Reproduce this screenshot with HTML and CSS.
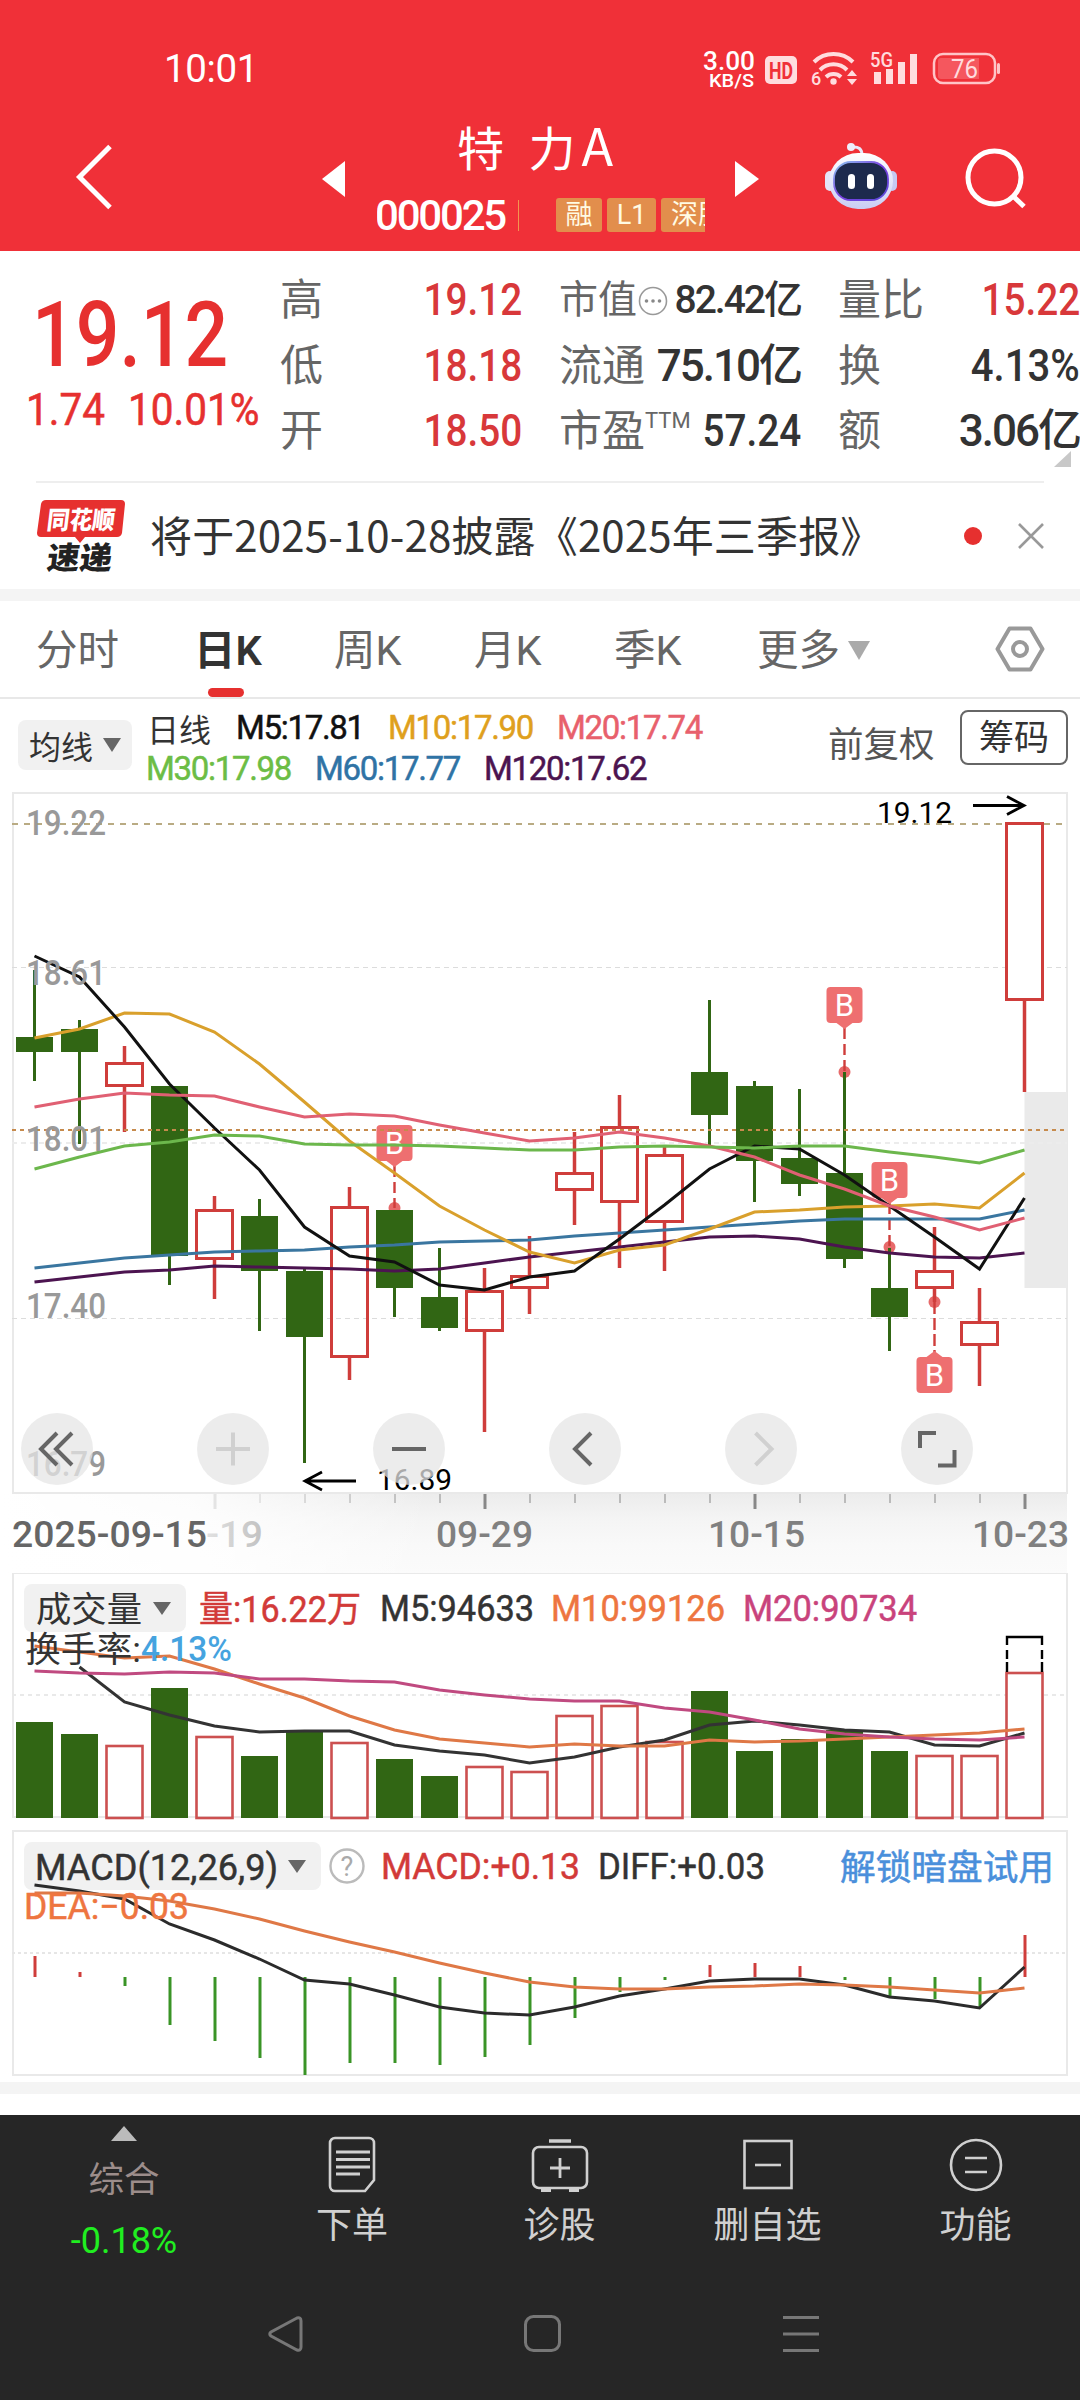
FILE: index.html
```html
<!DOCTYPE html>
<html lang="zh-CN">
<head>
<meta charset="utf-8">
<title>特 力A 000025</title>
<link rel="stylesheet" href="styles.css">
</head>
<body>
<header class="header">
  <div class="status">
    <span class="clock">10:01</span>
    <svg class="status-icons" width="305" height="48" viewBox="700 42 305 48">
      <g fill="#fff" font-weight="500">
        <text x="703" y="69.500" font-size="25" textLength="52" lengthAdjust="spacingAndGlyphs">3.00</text>
        <text x="709" y="87" font-size="19" textLength="45" lengthAdjust="spacingAndGlyphs">KB/S</text>
      </g>
      <rect x="765" y="56" width="32" height="28" rx="5" fill="#ffdcde"/>
      <text x="769" y="79" font-size="24" font-weight="700" fill="#f03038" textLength="24" lengthAdjust="spacingAndGlyphs">HD</text>
      <g fill="none" stroke="#ffdcde" stroke-width="4">
        <path d="M814 62a28 28 0 0 1 39 0"/><path d="M820 70a19 19 0 0 1 27 0"/><path d="M826 77a11 11 0 0 1 15 0"/>
      </g>
      <circle cx="833.500" cy="81.500" r="3.200" fill="#ffdcde"/>
      <text x="811" y="85" font-size="18" font-weight="500" fill="#ffdcde">6</text>
      <path d="M847 76l5-6 5 6zM847 79h10l-5 6z" fill="#ffdcde"/>
      <text x="870" y="67" font-size="20" font-weight="500" fill="#ffdcde" textLength="23" lengthAdjust="spacingAndGlyphs">5G</text>
      <path d="M874 72h7v12h-7zM886 69h7v15h-7zM898 62h7v22h-7zM910 54h7v30h-7z" fill="#ffdcde"/>
      <rect x="934" y="54" width="61" height="29" rx="9" fill="none" stroke="#ffc4c7" stroke-width="2.500"/>
      <path d="M941 58h38v21h-38a3 3 0 0 1-3-3V61a3 3 0 0 1 3-3z" fill="#f5575e"/>
      <rect x="997" y="63" width="3" height="11" rx="1.500" fill="#ffc4c7"/>
      <text x="951" y="77.500" font-size="25" fill="#ffdcde" textLength="27" lengthAdjust="spacingAndGlyphs">76</text>
    </svg>
  </div>
  <div class="titlebar">
    <svg class="back" width="40" height="70" viewBox="75 142 40 70"><path d="M110 146.500L79.500 177l30.500 30.500" fill="none" stroke="#fff" stroke-width="5"/></svg>
    <svg class="prev" width="24" height="36" viewBox="0 0 24 36"><path d="M24 0v36L1 18z" fill="#fff"/></svg>
    <div class="title">
      <h1 class="name">特 力<span class="suffix">A</span></h1>
      <div class="meta"><span class="code">000025</span><i class="bar"></i><span class="tag">融</span><span class="tag">L1</span><span class="tag tag-wide">深股通</span></div>
    </div>
    <svg class="next" width="24" height="36" viewBox="0 0 24 36"><path d="M0 0v36l24-18z" fill="#fff"/></svg>
    <svg class="robot" width="76" height="70" viewBox="823 142 76 70">
      <defs>
        <linearGradient id="shell" x1="0" y1="0" x2="0" y2="1"><stop offset="0" stop-color="#fff"/><stop offset="1" stop-color="#c9cdf4"/></linearGradient>
        <linearGradient id="rim" x1="0" y1="0" x2="1" y2="1"><stop offset="0" stop-color="#8cc8f0"/><stop offset=".5" stop-color="#7a3fe0"/><stop offset="1" stop-color="#5a4ad8"/></linearGradient>
      </defs>
      <path d="M852 147q10-1 10 8" fill="none" stroke="#e8e8fa" stroke-width="3"/>
      <circle cx="851" cy="147" r="4" fill="#eeeefb"/>
      <rect x="825" y="171" width="10" height="20" rx="5" fill="#e4e4f8"/><rect x="887" y="171" width="10" height="20" rx="5" fill="#c6c9f2"/>
      <rect x="829" y="153" width="64" height="56" rx="29" fill="url(#shell)"/>
      <rect x="834" y="162" width="54" height="38" rx="17" fill="#1d2a4d" stroke="url(#rim)" stroke-width="1.800"/>
      <rect x="848" y="174" width="7" height="15" rx="3.500" fill="#fff"/><rect x="867" y="174" width="7" height="15" rx="3.500" fill="#fff"/>
    </svg>
    <svg class="search" width="64" height="64" viewBox="964 146 64 64"><g fill="none" stroke="#fff" stroke-width="5"><circle cx="994.500" cy="177.500" r="26.500"/><path d="M1013 196l11 10.500"/></g></svg>
  </div>
</header>

<section class="quote">
  <div class="price">
    <div class="last"><span class="din">19.12</span></div>
    <div class="change"><span class="din">1.74</span><span class="din">10.01%</span></div>
  </div>
  <dl class="stats col-a">
    <dt>高</dt><dd class="up"><span class="din">19.12</span></dd>
    <dt>低</dt><dd class="up"><span class="din">18.18</span></dd>
    <dt>开</dt><dd class="up"><span class="din">18.50</span></dd>
  </dl>
  <dl class="stats col-b">
    <dt class="small">市值<svg width="30" height="30" viewBox="0 0 30 30"><circle cx="15" cy="15" r="13.500" fill="none" stroke="#999" stroke-width="1.600"/><g fill="#888"><circle cx="8.500" cy="15" r="1.800"/><circle cx="15" cy="15" r="1.800"/><circle cx="21.500" cy="15" r="1.800"/></g></svg></dt><dd class="tight">82.42亿</dd>
    <dt>流通</dt><dd>75.10亿</dd>
    <dt>市盈<sup>TTM</sup></dt><dd><span class="din">57.24</span></dd>
  </dl>
  <dl class="stats col-c">
    <dt>量比</dt><dd class="up"><span class="din">15.22</span></dd>
    <dt>换</dt><dd><span class="din pct">4.13%</span></dd>
    <dt>额</dt><dd>3.06亿</dd>
  </dl>
  <i class="corner"></i>
</section>

<section class="news">
  <svg width="90" height="84" viewBox="36 493 90 84">
    <path d="M46 499h75q4 0 4 4l-3 29q-1 4-5 4H85l-5 6-5-6H41q-4 0-4-4l4-29q1-4 5-4z" fill="#e6302f"/>
    <g transform="translate(46 528) skewX(-7)" font-weight="900"><text font-size="25" fill="#fff" textLength="68" lengthAdjust="spacingAndGlyphs">同花顺</text></g>
    <g transform="translate(46 568) skewX(-7)" font-weight="900"><text font-size="31" fill="#222" textLength="65" lengthAdjust="spacingAndGlyphs">速递</text></g>
  </svg>
  <p>将于2025-10-28披露《2025年三季报》</p>
  <i class="dot"></i>
  <svg width="26" height="26" viewBox="0 0 26 26"><path d="M1 1l24 24M25 1L1 25" stroke="#999" stroke-width="2.600"/></svg>
</section>

<nav class="tabs">
  <span>分时</span><span class="active">日K</span><span>周K</span><span>月K</span><span>季K</span><span class="more">更多<i class="tri"></i></span>
  <svg width="50" height="48" viewBox="995 625 50 48"><g fill="none" stroke="#999" stroke-width="4"><path d="M1009.500 628.500h21l12 20.500-12 20.500h-21l-12-20.500z" stroke-linejoin="round"/><circle cx="1020" cy="649" r="7"/></g></svg>
</nav>

<section class="indicators">
  <button class="pick">均线<i class="tri"></i></button>
  <div class="averages">
    <div class="line"><span class="kind">日线</span><span class="ma w5">M5:17.81</span><span class="ma m10">M10:17.90</span><span class="ma m20">M20:17.74</span></div>
    <div class="line"><span class="ma m30">M30:17.98</span><span class="ma m60">M60:17.77</span><span class="ma m120">M120:17.62</span></div>
  </div>
  <span class="adjust">前复权</span>
  <button class="chips">筹码</button>
</section>

<svg class="chart" id="kline" width="1080" height="781" viewBox="0 792 1080 781"></svg>
<svg class="chart" id="volume" width="1080" height="256" viewBox="0 1573 1080 256"></svg>
<svg class="chart" id="macd" width="1080" height="253" viewBox="0 1829 1080 253"></svg>
<div class="band"></div>

<footer class="footer">
  <div class="actions">
    <div class="index"><i class="up-tri"></i><span class="iname">综合</span><span class="ipct">-0.18%</span></div>
    <div class="action"><svg viewBox="0 0 58 58"><path d="M12 2h34a5 5 0 0 1 5 5v37l-9 11H12a5 5 0 0 1-5-5V7a5 5 0 0 1 5-5z"/><path d="M13 16h34M13 23.500h34M13 31h34M13 38h24" stroke-width="3.200"/></svg><span>下单</span></div>
    <div class="action"><svg viewBox="0 0 58 58"><rect x="2" y="11" width="54" height="41" rx="6"/><path d="M18 5h22" stroke-width="3.500"/><path d="M19 32h20M29 22v20M10 54.500h10M38 54.500h10" stroke-width="2.800"/></svg><span>诊股</span></div>
    <div class="action"><svg viewBox="0 0 58 58"><rect x="5.500" y="5" width="47" height="47"/><path d="M16 29h26"/></svg><span>删自选</span></div>
    <div class="action"><svg viewBox="0 0 58 58"><circle cx="29" cy="29" r="25"/><path d="M18 22h22M18 36h22"/></svg><span>功能</span></div>
  </div>
  <div class="sysnav">
    <svg width="36" height="38" viewBox="0 0 36 38"><path d="M30 3L4 17q-2.500 2 0 4l26 14q4 1 4-3V6q0-4-4-3z"/></svg>
    <svg width="38" height="38" viewBox="0 0 38 38"><rect x="1.500" y="1.500" width="34" height="34" rx="8"/></svg>
    <svg width="38" height="38" viewBox="0 0 38 38"><path d="M0 2.500h36M0 19h36M0 35.500h36"/></svg>
  </div>
</footer>
<script src="chart.js"></script>
</body>
</html>
```
FILE: styles.css
```css
* { box-sizing: border-box; }
body { margin: 0; width: 1080px; background: #fff; color: #333; font-family: Roboto, "Noto Sans CJK SC", sans-serif; }
svg { display: block; flex: none; }
svg text { font-family: Roboto, "Noto Sans CJK SC", sans-serif; }
h1, p, dl, dd { margin: 0; }
button { font: inherit; color: inherit; border: 0; padding: 0; }
.din { display: inline-block; transform: scaleX(.88); transform-origin: right; }
.tri { display: inline-block; border: solid transparent; border-width: 14px 9px 0; border-top-color: #666; }

.header { height: 251px; background: #f03038; color: #fff; }
.status { height: 100px; display: flex; justify-content: space-between; padding: 42px 75px 0 164px; }
.clock { font-size: 38.500px; line-height: 54px; letter-spacing: -.4px; }
.titlebar { height: 151px; display: grid; grid-template-columns: 321px 56px 328px 118px 141px 116px; }
.back { margin: 42px 0 0 75px; }
.prev { margin: 61px 0 0; }
.title { overflow: hidden; padding-top: 13px; }
.name { font: 400 47px/66px "Noto Sans CJK SC", sans-serif; word-spacing: 14px; margin-left: 80px; white-space: nowrap; }
.suffix { font-size: 52px; line-height: 50px; margin-left: 6px; }
.meta { display: flex; align-items: center; height: 34px; margin-top: 19px; white-space: nowrap; }
.code { font-size: 42px; font-weight: 500; width: 143px; margin-left: -2px; letter-spacing: -2.200px; flex: none; }
.bar { width: 1px; height: 31px; background: #f3954f; margin-right: 37px; flex: none; }
.tag { background: #e28e4c; color: #fffbe4; width: 46px; height: 34px; border-radius: 3px; font-size: 27px; line-height: 35px; text-align: center; margin-right: 5px; flex: none; }
.tag + .tag { width: 49px; }
.tag-wide { padding-left: 10px; text-align: left; }
.tag + .tag-wide { width: 100px; }
.next { margin: 61px 0 0 30px; }
.robot { margin-top: 42px; }
.search { margin-top: 46px; }

.quote { position: relative; height: 230px; display: grid; grid-template-columns: 280px 242px 279px 279px; }
.price { color: #e6302f; }
.price .din { transform-origin: left; font-weight: 500; }
.last { font-size: 91px; line-height: 100px; margin: 34px 0 0 32px; height: 100px; }
.last .din { transform: scaleX(.845); }
.change { font-size: 44px; line-height: 50px; display: grid; grid-template-columns: 102px 150px; margin: 0 0 0 26px; }
.change .din { font-weight: 400; -webkit-text-stroke: .6px; transform: scaleX(.92); }
.stats { display: grid; grid-template-columns: auto 1fr; grid-auto-rows: 65.500px; align-content: start; padding-top: 17px; line-height: 65px; white-space: nowrap; }
.stats dt { font-size: 43px; color: #666; display: flex; align-items: center; }
.stats dt.small { font-size: 39px; }
.stats dt.small svg { margin-left: 1px; }
.stats sup { font-size: 22px; line-height: 22px; margin-top: -22px; }
.stats dd { font-size: 44px; font-weight: 500; text-align: right; letter-spacing: -2px; }
.stats dd .din { letter-spacing: 0; }
.stats dd .pct { transform: scaleX(.91); }
.stats dd.tight { font-size: 39px; letter-spacing: -2px; }
.stats .up { color: #d8383a; }
.col-b { grid-template-columns: 84px 158px; padding-left: 37px; }
.col-c { padding-left: 37px; }
.corner { position: absolute; right: 9px; bottom: 14px; border: solid transparent; border-width: 0 0 16px 17px; border-bottom-color: #c8c8c8; }

.news { height: 108px; margin: 0 36px; border-top: 2px solid #eee; display: flex; align-items: center; }
.news p { font: 400 42px/60px "Noto Sans CJK SC", sans-serif; letter-spacing: .15px; margin: -4px 0 0 24px; width: 817px; white-space: nowrap; }
.dot { width: 18px; height: 18px; border-radius: 50%; background: #e6302f; margin-right: 36px; flex: none; }

.tabs { height: 110px; border-top: 12px solid #f4f4f4; border-bottom: 2px solid #e8e8e8; display: grid; grid-template-columns: 158px 140px 140px 140px 143px 238px 50px; padding-left: 36px; font-size: 41.500px; line-height: 96px; color: #666; align-items: center; white-space: nowrap; }
.tabs span { padding-top: 2px; height: 96px; }
.tabs .active { font-weight: 600; color: #333; position: relative; }
.tabs .active::after { content: ""; position: absolute; left: 14px; bottom: 0; width: 36px; height: 9px; border-radius: 5px; background: #e6302f; }
.tabs .tri { border-width: 19px 11px 0; border-top-color: #aaa; margin-left: 8px; vertical-align: 5px; }

.indicators { height: 93px; display: flex; padding-left: 18px; }
.pick { width: 114px; height: 50px; margin-top: 21px; background: #f1f1f1; border-radius: 8px; font-size: 32px; display: flex; align-items: center; justify-content: center; gap: 10px; }
.averages { width: 681px; padding: 8px 0 0 14px; }
.line { display: flex; height: 41px; align-items: center; font-size: 33px; }
.kind { font-size: 32px; width: 90px; padding-left: 1px; }
.ma { width: 169px; -webkit-text-stroke: .5px; letter-spacing: -1.300px; white-space: nowrap; }
.ma.w5 { width: 152px; color: #111; }
.m10 { color: #dfa01d; } .m20 { color: #e8606c; } .m30 { color: #6cbd45; } .m60 { color: #2f73a5; } .m120 { color: #4c1450; }
.adjust { font-size: 35.500px; color: #555; width: 147px; padding: 20px 0 0 15px; line-height: 52px; }
.chips { width: 108px; height: 55px; margin-top: 11px; border: 2px solid #666; border-radius: 8px; background: #fff; font-size: 35px; line-height: 54px; }

.band { height: 12px; background: #f4f4f4; margin-bottom: 21px; }

.footer { height: 285px; background: #262626; color: #d0d0d0; }
.actions { height: 185px; display: grid; grid-template-columns: 248px 208px 207px 209px 207px; }
.index { display: flex; flex-direction: column; align-items: center; }
.up-tri { border: solid transparent; border-width: 0 13px 15px; border-bottom-color: #bbb; margin-top: 11px; }
.iname { font-size: 35.500px; line-height: 50px; color: #9c8d8b; margin-top: 14px; }
.ipct { font-size: 36px; line-height: 50px; color: #20ee20; margin-top: 11px; }
.action { display: flex; flex-direction: column; align-items: center; padding-top: 21px; font-size: 36px; line-height: 50px; gap: 7px; }
.action svg { width: 58px; height: 58px; fill: none; stroke: #d0d0d0; stroke-width: 2.600; }
.sysnav { display: flex; padding: 15px 0 0 267px; gap: 221px; }
.sysnav svg { fill: none; stroke: #777; stroke-width: 3; }
```
FILE: chart.js
```js
const GREEN = '#316614', RED = '#cf3d3b';
const cx = i => 34.5 + 45 * i;
const el = [];
const add = s => el.push(s);
const flush = id => { document.getElementById(id).innerHTML = el.join(''); el.length = 0; };
const line = (x1, y1, x2, y2, c, w, dash) =>
  add(`<path d="M${x1} ${y1}L${x2} ${y2}" stroke="${c}" stroke-width="${w}"${dash ? ` stroke-dasharray="${dash}"` : ''}/>`);
const curve = (ys, c, from = 0, w = 3) =>
  add(`<polyline points="${ys.map((y, i) => cx(i + from) + ',' + y).join(' ')}" fill="none" stroke="${c}" stroke-width="${w}"/>`);
const text = (s, x, y, w, size, c, weight = 400, extra = '') =>
  add(`<text x="${x}" y="${y}" font-size="${size}" fill="${c}" font-weight="${weight}" textLength="${w}" lengthAdjust="spacingAndGlyphs" ${extra}>${s}</text>`);
const frame = (y, h) => add(`<rect x="13" y="${y}" width="1054" height="${h}" fill="none" stroke="#e9e9e9" stroke-width="2"/>`);
const button = (x, y, w) => add(`<rect x="${x}" y="${y}" width="${w}" height="48" rx="8" fill="#f1f1f1"/>`);
const tri = (x, y) => add(`<path d="M${x} ${y}h18l-9 13z" fill="#666"/>`);

/* candles: kind, wick top, body top, body bottom, wick bottom */
const candles = [
  ['g', 970, 1037, 1052, 1081], ['g', 1020, 1029, 1052, 1144], ['r', 1046, 1062, 1087, 1132],
  ['g', 1086, 1086, 1256, 1285], ['r', 1196, 1209, 1260, 1299], ['g', 1199, 1216, 1271, 1331],
  ['g', 1268, 1271, 1337, 1463], ['r', 1187, 1206, 1358, 1380], ['g', 1210, 1210, 1288, 1317],
  ['g', 1248, 1297, 1328, 1331], ['r', 1268, 1290, 1332, 1432], ['r', 1236, 1275, 1289, 1314],
  ['r', 1132, 1172, 1191, 1225], ['r', 1095, 1126, 1203, 1268], ['r', 1145, 1154, 1223, 1271],
  ['g', 1000, 1072, 1115, 1145], ['g', 1081, 1086, 1161, 1202], ['g', 1089, 1158, 1184, 1196],
  ['g', 1072, 1173, 1259, 1268], ['g', 1248, 1288, 1317, 1351], ['r', 1227, 1270, 1289, 1302],
  ['r', 1288, 1321, 1346, 1386], ['r', 822, 822, 1001, 1092]];

/* time axis background */
add('<defs><linearGradient id="ax" x1="0" y1="0" x2="0" y2="1"><stop offset="0" stop-color="#ececec"/><stop offset=".3" stop-color="#f4f4f4"/><stop offset=".65" stop-color="#f9f9f9"/><stop offset="1" stop-color="#fbfbfb"/></linearGradient><linearGradient id="fade"><stop offset="0" stop-color="#fff"/><stop offset=".45" stop-color="#fff" stop-opacity=".85"/><stop offset="1" stop-color="#fff" stop-opacity="0"/></linearGradient></defs>');
add('<rect x="0" y="1494" width="1067" height="79" fill="url(#ax)"/>');
for (let i = 4; i < 23; i++) {
  const big = i % 6 === 4;
  line(cx(i) + .5, 1494, cx(i) + .5, big ? 1509 : 1503, big ? '#888' : '#bbb', big ? 3 : 2);
}
text('-19', 206, 1547, 57, 36, '#666', 500);
add('<rect x="0" y="1494" width="430" height="79" fill="url(#fade)"/>');
text('2025-09-15', 12, 1547, 195, 36, '#666', 500);
[['09-29', 436], ['10-15', 708], ['10-23', 972]].forEach(([s, x]) => text(s, x, 1547, 97, 36, '#808080', 500));

frame(793, 700);
add('<rect x="1024.5" y="1092" width="43" height="196" fill="#eaeaea"/>');
line(12, 967.5, 1067, 967.5, '#dcdcdc', 1.2, '5 4');
line(12, 1143, 1067, 1143, '#ececec', 2, '5 4');
line(12, 1318.5, 1067, 1318.5, '#dcdcdc', 1.2, '5 4');
line(12, 824, 1067, 824, '#b9ab83', 2, '6 6');

/* buy markers: column, box top, dot y */
[[8, 1125, 1208], [18, 987, 1072], [19, 1162, 1247], [20, 1357, 1302]].forEach(([i, top, dot]) => {
  const x = cx(i), below = top > dot;
  add(`<circle cx="${x}" cy="${dot}" r="6" fill="#e76a6a"/>`);
  if (below) {
    line(x, dot, x, top - 4, RED, 2.4, '12 4');
    add(`<path d="M${x - 8} ${top}l8-6 8 6z" fill="#ee6f70"/>`);
  } else {
    line(x, top + 41, x, dot, RED, 2.4, '11 5');
    add(`<path d="M${x - 8} ${top + 36}l8 6 8-6z" fill="#ee6f70"/>`);
  }
  add(`<rect x="${x - 18}" y="${top}" width="36" height="36" rx="4" fill="#ee6f70"/>`);
  add(`<text x="${x}" y="${top + 29}" font-size="31" fill="#fff" text-anchor="middle">B</text>`);
});

candles.forEach(([k, a, b, c, d], i) => {
  const x = cx(i);
  if (k === 'g') {
    line(x, a, x, d, GREEN, 3);
    add(`<rect x="${x - 18.5}" y="${b}" width="37" height="${c - b}" fill="${GREEN}"/>`);
  } else {
    line(x, a, x, b, RED, 3.5);
    line(x, c, x, d, RED, 3.5);
    add(`<rect x="${x - 18}" y="${b + 1.5}" width="36" height="${c - b - 3}" fill="${i === 22 ? '#fff' : 'none'}" stroke="${RED}" stroke-width="3"/>`);
  }
});
line(12, 1130, 1067, 1130, '#c68a4c', 2, '4 4');

curve([1282, 1277, 1272, 1270, 1266, 1267, 1268, 1269, 1271, 1269, 1263, 1257, 1252, 1247, 1242, 1237, 1236, 1239, 1247, 1253, 1257, 1258, 1253], '#4c1450');
curve([1268, 1263, 1258, 1255, 1252, 1251, 1250, 1247, 1245, 1242, 1241, 1240, 1236, 1233, 1230, 1227, 1224, 1221, 1219, 1219, 1219, 1219, 1210], '#3a76a0');
curve([1038, 1029, 1013, 1014, 1032, 1064, 1102, 1141, 1173, 1206, 1230, 1252, 1263, 1250, 1245, 1229, 1212, 1210, 1207, 1206, 1204, 1208, 1173], '#d9a02c');
curve([956, 977, 1027, 1084, 1128, 1170, 1227, 1256, 1262, 1285, 1290, 1277, 1271, 1239, 1205, 1169, 1146, 1149, 1175, 1206, 1237, 1269, 1198], '#111');
curve([1107, 1099, 1093, 1095, 1096, 1107, 1117, 1114, 1116, 1125, 1133, 1141, 1138, 1132, 1138, 1146, 1157, 1175, 1189, 1206, 1217, 1230, 1218], '#e06073');
curve([1169, 1157, 1146, 1142, 1135, 1136, 1144, 1145, 1145, 1146, 1148, 1150, 1150, 1147, 1146, 1147, 1148, 1146, 1146, 1152, 1157, 1163, 1150], '#6cb74c');

[['19.22', 835], ['18.61', 985], ['18.01', 1151], ['17.40', 1318], ['16.79', 1476]].forEach(([s, y]) => text(s, 26, y, 80, 35, '#999', 500));
text('19.12', 877, 823, 75, 30, '#000');
text('16.89', 377, 1490, 75, 30, '#000');
add('<path d="M973 805.500h50M1007 796.500l17 9-17 9M356 1481h-50M322 1472l-17 9 17 9" fill="none" stroke="#000" stroke-width="2.800"/>');

/* floating chart controls */
[57, 233, 409, 585, 761, 937].forEach(x => add(`<circle cx="${x}" cy="1449" r="36" fill="rgb(229,229,229)" fill-opacity=".74"/>`));
add('<g fill="none" stroke="#666" stroke-width="4"><path d="M57 1433l-16 16 16 16M72 1433l-16 16 16 16M392 1449h34M591 1433l-16 16 16 16M920 1448v-15h16M938 1465.500h16.500V1450"/></g>');
add('<g fill="none" stroke="#d0d0d0" stroke-width="4"><path d="M216 1449h34M233 1432.500v33M755.500 1433l16 16-16 16"/></g>');
flush('kline');

/* volume */
frame(1573, 244);
line(12, 1695, 1067, 1695, '#e9e9e9', 2, '4 4');
[['g', 1722], ['g', 1734], ['r', 1745], ['g', 1688], ['r', 1736], ['g', 1756], ['g', 1731], ['r', 1742], ['g', 1759],
 ['g', 1776], ['r', 1766], ['r', 1771], ['r', 1715], ['r', 1705], ['r', 1741], ['g', 1691], ['g', 1751], ['g', 1739],
 ['g', 1730], ['g', 1751], ['r', 1755], ['r', 1755], ['r', 1672]].forEach(([k, y], i) => {
  if (k === 'g') add(`<rect x="${cx(i) - 18.5}" y="${y}" width="37" height="${1818 - y}" fill="${GREEN}"/>`);
  else add(`<rect x="${cx(i) - 18}" y="${y + 1}" width="36" height="${1817 - y}" fill="${i === 22 ? '#fff' : 'none'}" stroke="#cc5050" stroke-width="2.6"/>`);
});
add('<path d="M1007 1672v-10M1007 1659v-9M1007 1645v-8h35v8M1042 1650v9M1042 1662v10" fill="none" stroke="#000" stroke-width="2.400"/>');
curve([1667, 1702, 1715, 1726, 1732, 1731, 1731, 1745, 1751, 1755, 1763, 1757, 1747, 1740, 1725, 1721, 1725, 1730, 1732, 1745, 1746, 1733], '#333', 1);
curve([1646, 1652, 1658, 1656, 1669, 1684, 1698, 1716, 1730, 1739, 1743, 1747, 1744, 1746, 1746, 1740, 1742, 1741, 1739, 1737, 1735, 1733, 1729], '#df7846');
curve([1671, 1673, 1674, 1672, 1673, 1679, 1679, 1681, 1682, 1690, 1695, 1699, 1701, 1701, 1708, 1712, 1720, 1729, 1734, 1737, 1739, 1740, 1737], '#c04a80');
const bolder = (c) => `stroke="${c}" stroke-width=".5"`;
button(24, 1584, 162);
text('成交量', 36, 1622, 106, 35, '#333');
tri(153, 1602);
text('量:16.22万', 199, 1622, 162, 36, '#d23a38', 400, bolder('#d23a38'));
text('M5:94633', 380, 1621, 154, 37, '#333', 400, bolder('#333'));
text('M10:99126', 551, 1621, 174, 37, '#ee7540', 400, bolder('#ee7540'));
text('M20:90734', 743, 1621, 174, 37, '#c9437c', 400, bolder('#c9437c'));
text('换手率:', 25, 1662, 116, 35, '#333');
text('4.13%', 141, 1661, 91, 35, '#45a3df', 500);
flush('volume');

/* macd */
frame(1831, 244);
line(12, 1953, 1067, 1953, '#e6e6e6', 2, '3 3');
[1956, 1972, 1986, 2025, 2041, 2058, 2075, 2063, 2063, 2065, 2057, 2045, 2018, 1992, 1980, 1965, 1963, 1966, 1980, 1997, 1999, 2008, 1935]
  .forEach((y, i) => line(cx(i) + .5, 1977, cx(i) + .5, y, y < 1977 ? '#cf3d3b' : '#3a9426', 3));
button(24, 1842, 297);
curve([1885, 1891, 1899, 1924, 1940, 1959, 1980, 1984, 1995, 2007, 2013, 2015, 2007, 1996, 1989, 1981, 1979, 1979, 1985, 1997, 2001, 2008, 1967], '#2b2b2b');
curve([1893, 1893, 1896, 1901, 1909, 1919, 1931, 1942, 1952, 1963, 1973, 1982, 1987, 1989, 1989, 1987, 1986, 1984, 1985, 1987, 1990, 1993, 1988], '#df7846');
text('MACD(12,26,9)', 35, 1880, 243, 37, '#333', 400, bolder('#333'));
tri(288, 1860);
add('<circle cx="347" cy="1866" r="16.500" fill="none" stroke="#bbb" stroke-width="2.400"/><text x="347" y="1876" text-anchor="middle" font-size="27" fill="#aaa">?</text>');
text('MACD:+0.13', 381, 1879, 199, 37, '#d23a38', 400, bolder('#d23a38'));
text('DIFF:+0.03', 598, 1879, 167, 37, '#333', 400, bolder('#333'));
text('解锁暗盘试用', 840, 1880, 214, 35.5, '#4a8fdb', 400, bolder('#4a8fdb'));
text('DEA:−0.03', 24, 1919, 165, 36, '#ee7540', 400, bolder('#ee7540'));
flush('macd');
```
